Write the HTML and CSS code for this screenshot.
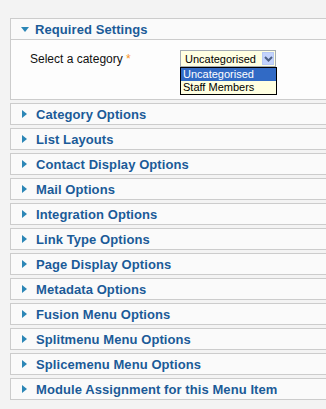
FILE: index.html
```html
<!DOCTYPE html>
<html lang="en">
<head>
    <meta charset="UTF-8">
    <meta name="viewport" content="width=device-width, initial-scale=1.0">
    <title>Menu Item Parameters</title>
    <link rel="stylesheet" href="styles.css">
</head>
<body>

<div class="sliders">

    <div class="panel open">
        <h3 class="toggler"><span class="arrow down"></span>Required Settings</h3>
        <div class="content">
            <div class="param-row">
                <label class="param-label">Select a category <span class="star">*</span></label>
                <div class="select-wrap">
                    <div class="select-box">
                        <span class="select-value">Uncategorised</span>
                        <span class="select-btn">
                            <svg width="9" height="6" viewBox="0 0 9 6"><path d="M1 1 L4.5 4.5 L8 1" fill="none" stroke="#4d6185" stroke-width="2"/></svg>
                        </span>
                    </div>
                    <ul class="select-list">
                        <li class="selected">Uncategorised</li>
                        <li>Staff Members</li>
                    </ul>
                </div>
            </div>
        </div>
    </div>

    <div class="panel"><h3 class="toggler"><span class="arrow"></span>Category Options</h3></div>
    <div class="panel"><h3 class="toggler"><span class="arrow"></span>List Layouts</h3></div>
    <div class="panel"><h3 class="toggler"><span class="arrow"></span>Contact Display Options</h3></div>
    <div class="panel"><h3 class="toggler"><span class="arrow"></span>Mail Options</h3></div>
    <div class="panel"><h3 class="toggler"><span class="arrow"></span>Integration Options</h3></div>
    <div class="panel"><h3 class="toggler"><span class="arrow"></span>Link Type Options</h3></div>
    <div class="panel"><h3 class="toggler"><span class="arrow"></span>Page Display Options</h3></div>
    <div class="panel"><h3 class="toggler"><span class="arrow"></span>Metadata Options</h3></div>
    <div class="panel"><h3 class="toggler"><span class="arrow"></span>Fusion Menu Options</h3></div>
    <div class="panel"><h3 class="toggler"><span class="arrow"></span>Splitmenu Menu Options</h3></div>
    <div class="panel"><h3 class="toggler"><span class="arrow"></span>Splicemenu Menu Options</h3></div>
    <div class="panel"><h3 class="toggler"><span class="arrow"></span>Module Assignment for this Menu Item</h3></div>

</div>

</body>
</html>
```

FILE: styles.css
```css
body {
    margin: 0;
    padding: 0;
    background-color: #f3f3f3;
    font-family: "Liberation Sans", Arial, sans-serif;
}

.sliders {
    padding: 18px 0 0 10px;
}

.panel {
    border: 1px solid #cccccc;
    border-right: none;
    background-color: #fafafa;
    margin-bottom: 3px;
}

.toggler {
    margin: 0;
    height: 19px;
    padding-top: 1px;
    line-height: 19px;
    font-size: 13px;
    font-weight: bold;
    letter-spacing: 0.08px;
    color: #1b5b98;
    display: flex;
    align-items: center;
    white-space: nowrap;
}

.arrow {
    width: 0;
    height: 0;
    border-left: 5px solid #2b86b6;
    border-top: 4px solid transparent;
    border-bottom: 4px solid transparent;
    margin: -2px 9px 0 11px;
}

.arrow.down {
    border-left: 4px solid transparent;
    border-right: 4px solid transparent;
    border-top: 5px solid #2b86b6;
    border-bottom: none;
    margin: 0 6px 0 10px;
}

.open .toggler {
    border-bottom: 1px solid #cccccc;
}

.content {
    height: 59px;
    background-color: #fdfdfd;
}

.param-row {
    display: flex;
    padding: 10px 0 0 19px;
}

.param-label {
    width: 150px;
    font-size: 12px;
    color: #111;
    line-height: 17px;
    padding-top: 1px;
}

.star {
    color: #f7941d;
}

.select-wrap {
    position: relative;
    width: 96px;
}

.select-box {
    display: flex;
    align-items: center;
    height: 15px;
    width: 94px;
    border: 1px solid #a5acb2;
    background-color: #ffffe1;
    font-size: 11px;
    color: #000;
}

.select-value {
    flex: 1;
    padding-left: 4px;
}

.select-btn {
    width: 12px;
    height: 13px;
    margin-right: 1px;
    background-color: #c3d3fd;
    border: 1px solid #b7c9f4;
    box-sizing: border-box;
    display: flex;
    align-items: center;
    justify-content: center;
}

.select-list {
    position: absolute;
    top: 17px;
    left: 0;
    width: 95px;
    margin: 0;
    padding: 0;
    list-style: none;
    border: 1px solid #000;
    background-color: #ffffe1;
    font-size: 11px;
    line-height: 13px;
}

.select-list li {
    padding-left: 2px;
    height: 13px;
    color: #000;
}

.select-list li.selected {
    background-color: #316ac5;
    color: #fff;
}
```
